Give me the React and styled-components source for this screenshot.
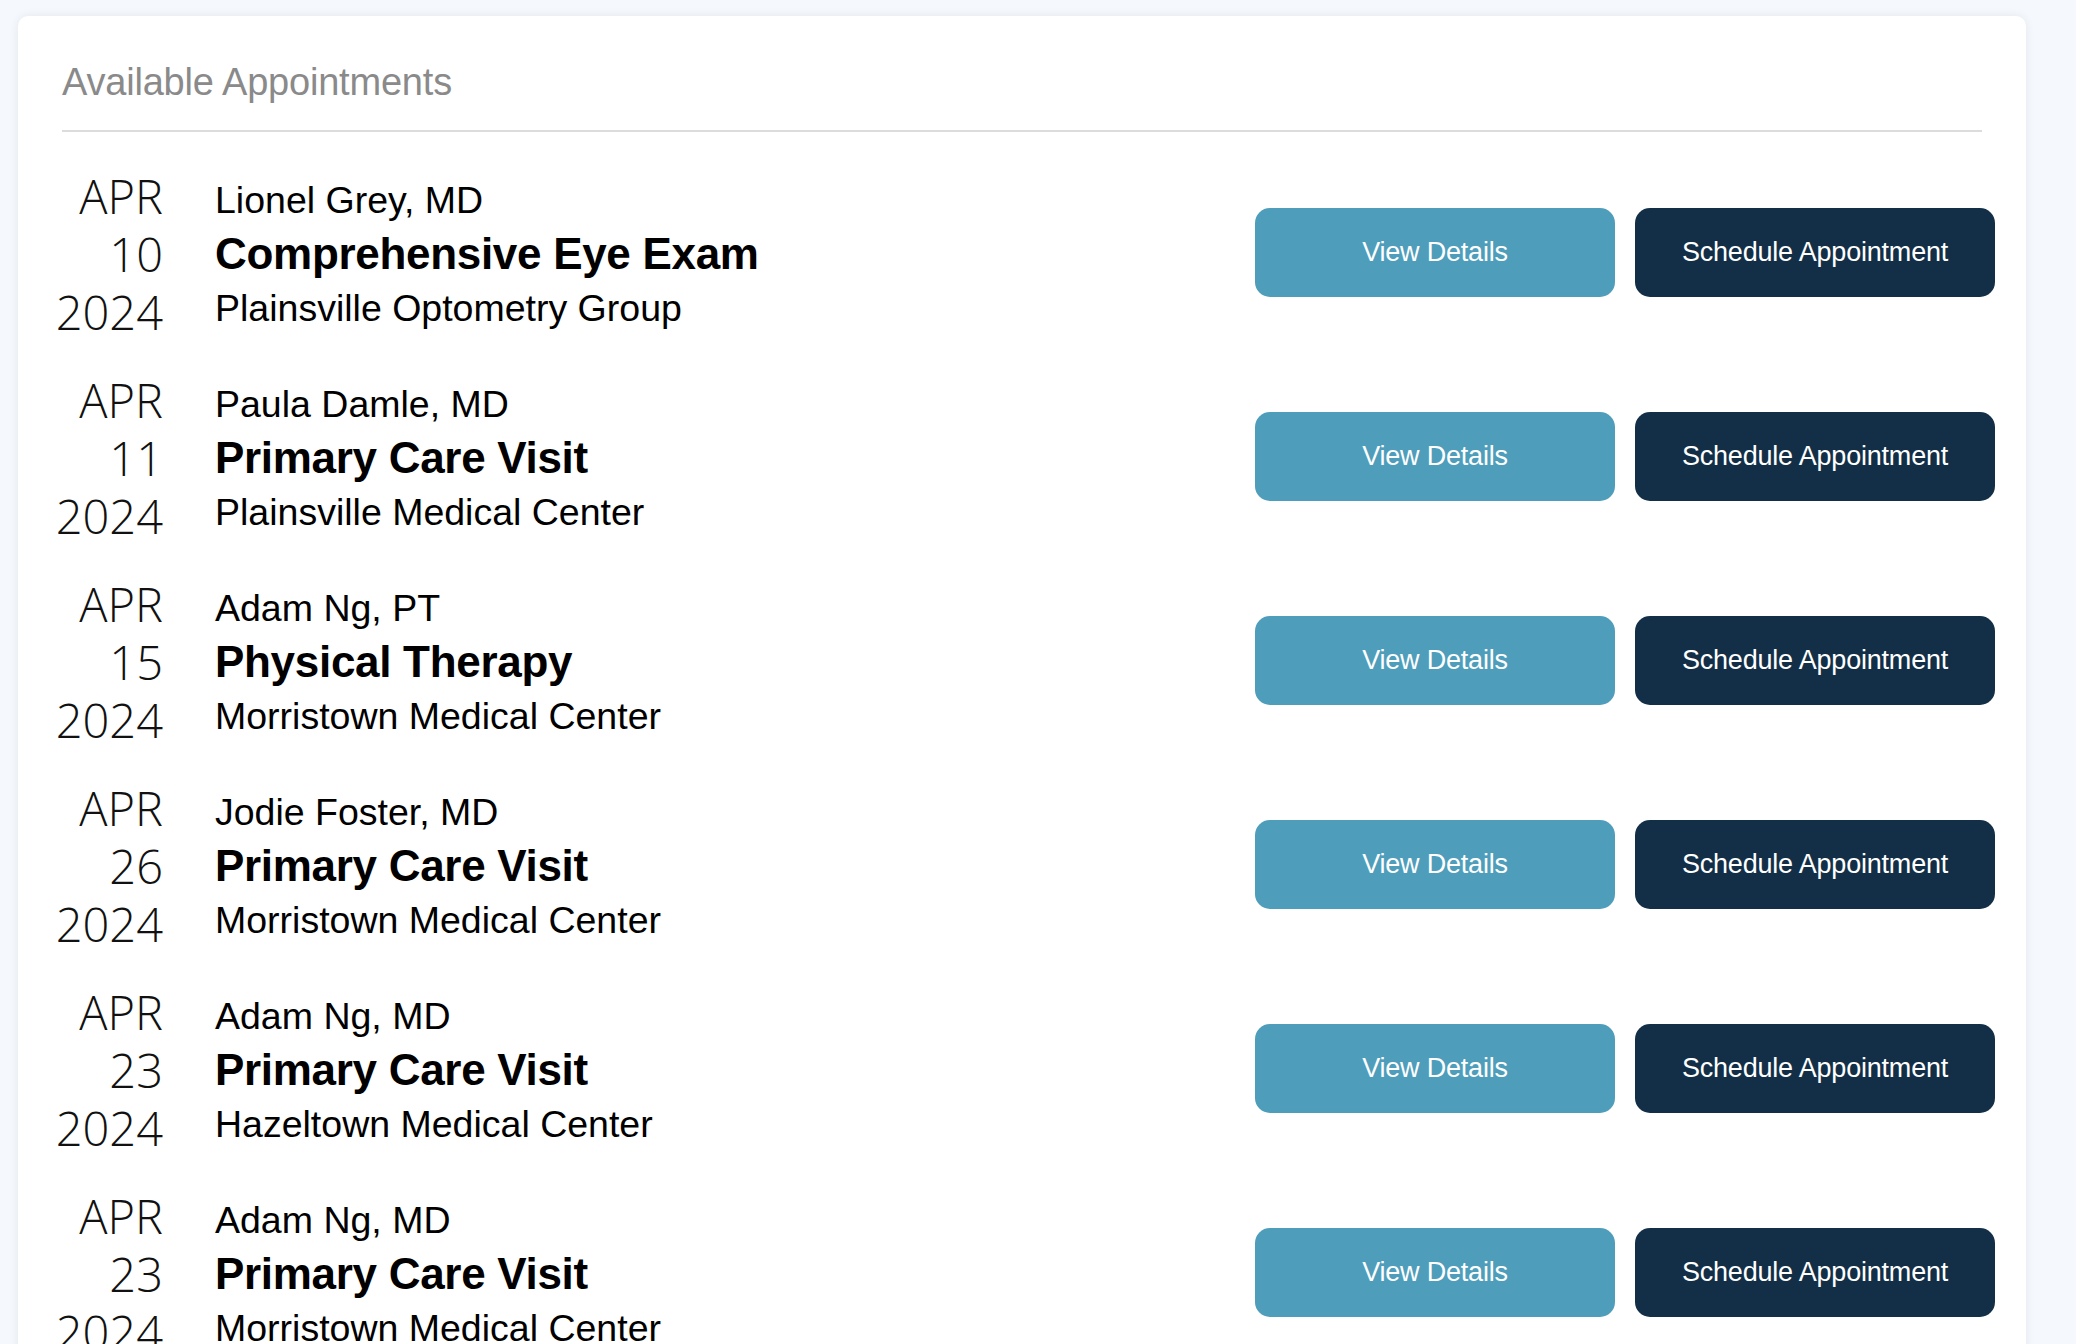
import React from 'react';
import styled, { createGlobalStyle } from 'styled-components';

const GlobalStyle = createGlobalStyle`
  html, body {
    margin: 0;
    padding: 0;
    background: #f5f8fc;
    overflow: hidden;
  }
  body {
    font-family: "Liberation Sans", Arial, sans-serif;
  }
`;

const appointments = [
  { month: 'APR', day: '10', year: '2024', doctor: 'Lionel Grey, MD', title: 'Comprehensive Eye Exam', place: 'Plainsville Optometry Group' },
  { month: 'APR', day: '11', year: '2024', doctor: 'Paula Damle, MD', title: 'Primary Care Visit', place: 'Plainsville Medical Center' },
  { month: 'APR', day: '15', year: '2024', doctor: 'Adam Ng, PT', title: 'Physical Therapy', place: 'Morristown Medical Center' },
  { month: 'APR', day: '26', year: '2024', doctor: 'Jodie Foster, MD', title: 'Primary Care Visit', place: 'Morristown Medical Center' },
  { month: 'APR', day: '23', year: '2024', doctor: 'Adam Ng, MD', title: 'Primary Care Visit', place: 'Hazeltown Medical Center' },
  { month: 'APR', day: '23', year: '2024', doctor: 'Adam Ng, MD', title: 'Primary Care Visit', place: 'Morristown Medical Center' },
];

const Page = styled.div`
  padding: 16px 50px 0 18px;
  height: 1344px;
  box-sizing: border-box;
`;

const Card = styled.section`
  background: #fff;
  border-radius: 10px;
  box-shadow: 0 0 10px rgba(30, 50, 90, 0.08);
  padding: 44px 44px 0 44px;
  height: 1400px;
  box-sizing: border-box;
`;

const Heading = styled.h2`
  margin: 0 0 26px;
  font-size: 38px;
  line-height: 44px;
  font-weight: normal;
  color: #8a8a8a;
  letter-spacing: -0.2px;
`;

const Divider = styled.hr`
  margin: 0;
  border: none;
  height: 2px;
  background: #dcdcdc;
`;

const List = styled.div`
  margin: 20px -13px 0 0;
  display: flex;
  flex-direction: column;
`;

const Row = styled.div`
  display: flex;
  align-items: center;
  height: 204px;
`;

const DateCol = styled.div`
  width: 101px;
  display: flex;
  flex-direction: column;
  align-items: flex-end;
  font-family: "Open Sans", Roboto, sans-serif;
  font-weight: 300;
  font-size: 47px;
  line-height: 58px;
  color: #111;
`;

const Info = styled.div`
  margin-left: 52px;
  flex: 1;
  display: flex;
  flex-direction: column;
  color: #000;
`;

const Line = styled.div`
  font-size: ${(p) => (p.$big ? '44px' : '37.5px')};
  font-weight: ${(p) => (p.$big ? 'bold' : 'normal')};
  line-height: 54px;
  letter-spacing: ${(p) => (p.$big ? '-0.3px' : '0')};
  white-space: nowrap;
`;

const Actions = styled.div`
  display: flex;
  gap: 20px;
  margin-bottom: 3px;
`;

const Button = styled.button`
  width: 360px;
  height: 89px;
  border: none;
  border-radius: 15px;
  background: ${(p) => (p.$dark ? '#132f47' : '#4e9dbb')};
  color: #fff;
  font-family: "Liberation Sans", Arial, sans-serif;
  font-size: 27px;
  letter-spacing: -0.2px;
  cursor: pointer;
`;

const AppointmentRow = ({ a }) => (
  <Row>
    <DateCol>
      <span>{a.month}</span>
      <span>{a.day}</span>
      <span>{a.year}</span>
    </DateCol>
    <Info>
      <Line>{a.doctor}</Line>
      <Line $big>{a.title}</Line>
      <Line>{a.place}</Line>
    </Info>
    <Actions>
      <Button>View Details</Button>
      <Button $dark>Schedule Appointment</Button>
    </Actions>
  </Row>
);

export default function App() {
  return (
    <>
      <GlobalStyle />
      <Page>
        <Card>
          <Heading>Available Appointments</Heading>
          <Divider />
          <List>
            {appointments.map((a, i) => (
              <AppointmentRow key={i} a={a} />
            ))}
          </List>
        </Card>
      </Page>
    </>
  );
}
